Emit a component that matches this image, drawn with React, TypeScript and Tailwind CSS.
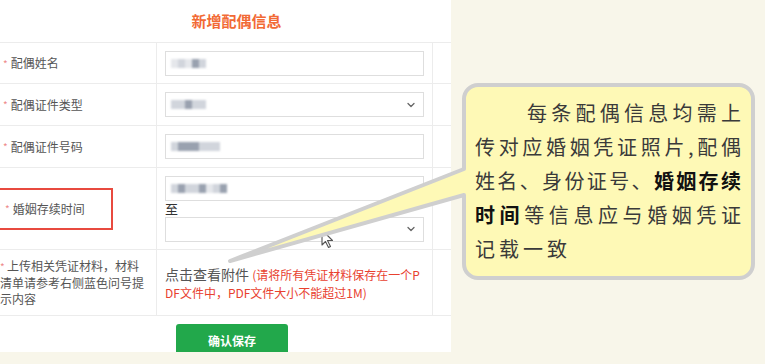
import { ChevronDown } from 'lucide-react';

const FONT = { fontFamily: '"Noto Sans CJK SC", "Noto Sans", sans-serif' };

// mosaic placeholder standing in for the blurred values in the inputs
function Mosaic({ cells }: { cells: string[] }) {
  return (
    <div className="flex blur-[1px]">
      {cells.map((c, i) => (
        <div key={i} className={`w-[7px] h-[9px] ${c}`} />
      ))}
    </div>
  );
}

function Field({ cells, select = false }: { cells?: string[]; select?: boolean }) {
  return (
    <div className="w-[259px] h-[25px] border border-[#dedede] bg-white flex items-center justify-between pl-[5px] pr-[6px]">
      {cells ? <Mosaic cells={cells} /> : <span />}
      {select && <ChevronDown size={12} strokeWidth={2.6} className="text-[#666]" />}
    </div>
  );
}

function Label({ text }: { text: string }) {
  return (
    <div className="flex items-center pl-[3px] gap-[3px] text-[12px] text-[#555]">
      <span className="text-[10px] text-[#ee8a8a]">*</span>
      <span>{text}</span>
    </div>
  );
}

function Row({ h, label, children }: { h: string; label: React.ReactNode; children: React.ReactNode }) {
  return (
    <div className={`grid grid-cols-[157px_276px_18px] border-b border-[#ececec] ${h}`}>
      <div className="border-r border-[#ececec] flex items-center">{label}</div>
      <div className="border-r border-[#ececec] flex items-center pl-[8px]">{children}</div>
      <div />
    </div>
  );
}

type Seg = [string, boolean];

const NOTE: { segs: Seg[]; indent?: boolean; loose?: boolean }[] = [
  { segs: [['每条配偶信息均需上', false]], indent: true },
  { segs: [['传对应婚姻凭证照片,配偶', false]] },
  { segs: [['姓名、身份证号、', false], ['婚姻存续', true]] },
  { segs: [['时间', true], ['等信息应与婚姻凭证', false]] },
  { segs: [['记载一致', false]], loose: true },
];

function Callout() {
  return (
    <>
      <svg className="absolute left-0 top-0 pointer-events-none" width="765" height="364" viewBox="0 0 765 364">
        <path
          d="M478 85 H739 A14 14 0 0 1 753 99 V264 A14 14 0 0 1 739 278 H478 A14 14 0 0 1 464 264 V195 L230 261 L464 169 V99 A14 14 0 0 1 478 85 Z"
          fill="#fef9b6"
          stroke="#cfcfcf"
          strokeWidth="4"
          strokeLinejoin="round"
        />
      </svg>
      <div className="absolute left-[475px] top-[96px] w-[266px] text-[20px] leading-[34px] text-[#3a3a3a]" style={FONT}>
        {NOTE.map((line, i) => (
          <div
            key={i}
            className={`flex ${line.loose ? 'gap-[4px]' : 'justify-between'} ${line.indent ? 'pl-[52px]' : ''}`}
          >
            {line.segs.flatMap(([t, bold], j) =>
              Array.from(t).map((ch, k) => (
                <span key={`${j}-${k}`} className={bold ? 'font-bold text-[#111]' : ''}>
                  {ch}
                </span>
              ))
            )}
          </div>
        ))}
      </div>
    </>
  );
}

function Cursor() {
  return (
    <svg className="absolute left-[321px] top-[229px]" width="13" height="20" viewBox="0 0 13 20">
      <path d="M1 1 L1 16 L4.5 12.5 L7.5 18.5 L9.5 17.5 L6.5 11.5 L11.5 11.5 Z" fill="#fff" stroke="#555" strokeWidth="1.1" strokeLinejoin="round" />
    </svg>
  );
}

export default function App() {
  return (
    <div className="relative w-[765px] h-[364px] bg-[#f8f6ea] overflow-hidden" style={FONT}>
      <div className="w-[451px] h-[352px] bg-white overflow-hidden flex flex-col">
        <div className="shrink-0 h-[42px] flex items-center justify-center pl-[22px] text-[15px] font-bold text-[#f26a35]">
          新增配偶信息
        </div>

        <div className="shrink-0 border-t border-[#ececec]">
          <Row h="h-[41px]" label={<Label text="配偶姓名" />}>
            <Field cells={['bg-gray-200', 'bg-gray-300', 'bg-gray-200', 'bg-gray-400', 'bg-gray-300']} />
          </Row>
          <Row h="h-[42px]" label={<Label text="配偶证件类型" />}>
            <Field select cells={['bg-gray-300', 'bg-gray-300', 'bg-gray-400', 'bg-gray-300', 'bg-gray-300']} />
          </Row>
          <Row h="h-[42px]" label={<Label text="配偶证件号码" />}>
            <Field cells={['bg-gray-300', 'bg-gray-400', 'bg-gray-400', 'bg-gray-400', 'bg-gray-300', 'bg-gray-300', 'bg-gray-300']} />
          </Row>
          <Row
            h="h-[82px]"
            label={
              <div className="-ml-[4px] w-[117px] h-[42px] border-2 border-[#e84a3f] flex items-center pl-[4px]">
                <Label text="婚姻存续时间" />
              </div>
            }
          >
            <div className="flex flex-col">
              <Field cells={['bg-gray-300', 'bg-gray-400', 'bg-gray-300', 'bg-gray-300', 'bg-gray-400', 'bg-gray-200', 'bg-gray-300', 'bg-gray-400']} />
              <div className="h-[16px] text-[13px] leading-[16px] text-[#333]">至</div>
              <Field select />
            </div>
          </Row>
          <Row
            h="h-[66px]"
            label={
              <div className="w-[147px] text-[12px] leading-[16px] text-[#555]">
                <span className="text-[10px] text-[#ee8a8a]"> * </span>上传相关凭证材料，材料清单请参考右侧蓝色问号提示内容
              </div>
            }
          >
            <div className="w-[256px] leading-[17px] break-all">
              <span className="text-[14px] text-[#555]">点击查看附件 </span>
              <span className="text-[12px] text-[#e8412f]">(请将所有凭证材料保存在一个PDF文件中，PDF文件大小不能超过1M)</span>
            </div>
          </Row>
        </div>

        <div className="shrink-0 pl-[176px] pt-[8px]">
          <div className="w-[112px] h-[34px] bg-[#22a84b] rounded-[3px] flex items-center justify-center text-[12px] font-bold text-white">
            确认保存
          </div>
        </div>
      </div>

      <Cursor />
      <Callout />
    </div>
  );
}
